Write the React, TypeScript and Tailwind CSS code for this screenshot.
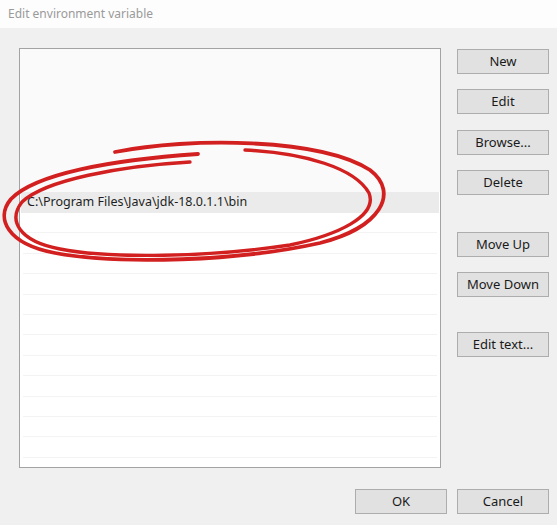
import React from "react";

const font = { fontFamily: '"Noto Sans", "Open Sans", "Liberation Sans", sans-serif' };

function Btn({ label, className = "" }: { label: string; className?: string }) {
  return (
    <div
      className={`flex h-[25px] w-[92px] items-center justify-center border border-[#adadad] bg-[#e1e1e1] text-[13px] text-[#1a1a1a] ${className}`}
    >
      {label}
    </div>
  );
}

export default function App() {
  const emptyRows = Array.from({ length: 12 });
  return (
    <div className="relative h-[525px] w-[557px] overflow-hidden bg-[#f0f0f0]" style={font}>
      <div className="flex h-[28px] items-center bg-[#fdfdfd] pl-[8px] text-[12px] text-[#9a9a9a]">
        Edit environment variable
      </div>
      <div className="flex">
        <div className="ml-[19px] mt-[20px] flex h-[420px] w-[422px] flex-col border border-[#a3a3a3] bg-white">
          <div className="h-[143px] bg-[#fafafa]" />
          <div className="mx-[1px] flex h-[21px] items-center bg-[#ebebeb] pl-[6px] text-[12.5px] text-[#1e1e1e]">
            C:\Program Files\Java\jdk-18.0.1.1\bin
          </div>
          <div className="flex flex-col">
            {emptyRows.map((_, i) => (
              <div key={i} className="mx-[3px] h-[20.4px] border-b border-[#f3f3f3]" />
            ))}
          </div>
        </div>
        <div className="ml-[16px] flex flex-col pt-[21px]">
          <Btn label="New" />
          <Btn label="Edit" className="mt-[15px]" />
          <Btn label="Browse..." className="mt-[16px]" />
          <Btn label="Delete" className="mt-[15px]" />
          <Btn label="Move Up" className="mt-[37px]" />
          <Btn label="Move Down" className="mt-[15px]" />
          <Btn label="Edit text..." className="mt-[35px]" />
        </div>
      </div>
      <div className="mt-[21px] flex justify-end gap-[10px] pr-[8px]">
        <Btn label="OK" />
        <Btn label="Cancel" />
      </div>
      <svg
        className="pointer-events-none absolute left-0 top-0"
        width="557"
        height="525"
        viewBox="0 0 557 525"
        fill="none"
      >
        <path
          d="M115,152 C190,137 320,138 370,170 C400,193 380,228 320,243 C240,261 120,265 55,253 C7,244 -5,218 11,199 C35,174 110,160 198,154"
          stroke="#d21f1f"
          strokeWidth="3.8"
          strokeLinecap="round"
        />
        <path
          d="M245,150 C305,153 355,168 369,193 C378,216 338,235 290,245 C210,257 110,259 60,249 C18,241 8,220 22,202 C45,180 120,166 190,162"
          stroke="#d21f1f"
          strokeWidth="3.4"
          strokeLinecap="round"
        />
      </svg>
    </div>
  );
}
